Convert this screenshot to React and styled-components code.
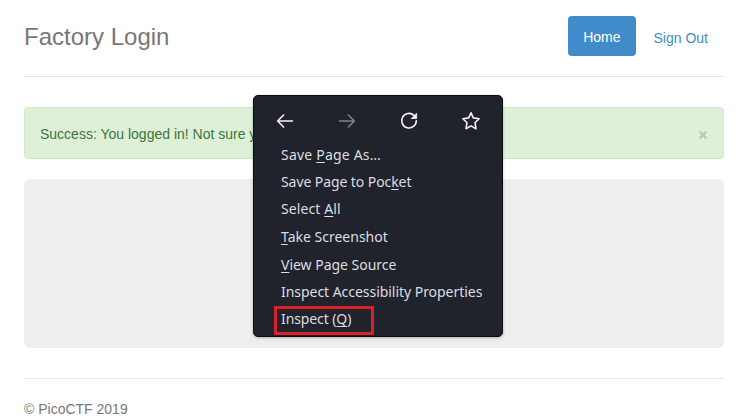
import React from 'react';
import styled, { createGlobalStyle } from 'styled-components';

const GlobalStyle = createGlobalStyle`
  * { box-sizing: border-box; }
  body {
    margin: 0;
    background: #fff;
    overflow: hidden;
    font-family: "Liberation Sans", Arial, sans-serif;
    font-size: 14px;
    line-height: 20px;
    color: #333;
  }
`;

const Page = styled.div`
  position: relative;
  width: 743px;
  height: 419px;
  padding: 0 19px 0 24px;
  overflow: hidden;
`;

const Header = styled.header`
  display: flex;
  justify-content: space-between;
  height: 77px;
  padding-top: 16px;
  border-bottom: 1px solid #e5e5e5;
`;

const Title = styled.h3`
  margin: 0;
  font-size: 24px;
  font-weight: 400;
  line-height: 42px;
  color: #777;
`;

const Nav = styled.nav`
  display: flex;
  gap: 2px;
`;

const NavLink = styled.a`
  height: 40px;
  padding: ${(p) => (p.$active ? '11px 15px 9px' : '12px 16px 8px')};
  border-radius: 4px;
  color: ${(p) => (p.$active ? '#fff' : '#428bca')};
  background: ${(p) => (p.$active ? '#428bca' : 'transparent')};
`;

const Alert = styled.div`
  display: flex;
  justify-content: space-between;
  height: 52px;
  margin-top: 30px;
  padding: 16px 15px 14px;
  border: 1px solid #d0e9c6;
  border-radius: 4px;
  background: #dff0d8;
  color: #3c763d;
  white-space: nowrap;
`;

const Dismiss = styled.svg`
  width: 10px;
  height: 10px;
  margin-top: 6px;
`;

const Jumbotron = styled.main`
  height: 169px;
  margin-top: 20px;
  border-radius: 6px;
  background: #eee;
`;

const Footer = styled.footer`
  margin-top: 30px;
  padding-top: 20px;
  border-top: 1px solid #e5e5e5;
  color: #777;
`;

const Menu = styled.div`
  position: absolute;
  left: 253px;
  top: 95px;
  width: 250px;
  height: 242px;
  border: 1px solid #0a0b0f;
  border-radius: 5px;
  background: #20232c;
  box-shadow: 0 1px 3px rgba(0, 0, 0, 0.25);
  color: #dcdde0;
  font-family: "Noto Sans", sans-serif;
  font-size: 14px;
`;

const Toolbar = styled.div`
  display: flex;
  justify-content: space-between;
  align-items: center;
  height: 45px;
  padding: 4px 21px 0 21px;
`;

const Icon = styled.svg`
  width: 20px;
  height: 20px;
  fill: none;
  stroke: ${(p) => (p.$dim ? '#80828a' : '#f4f4f6')};
  stroke-width: 1.6;
  stroke-linecap: round;
  stroke-linejoin: round;
`;

const Items = styled.div`
  display: grid;
  grid-template-rows: 27px 27px 28px 28px 27px 27px 27px;
  padding: 4px 0 0 27px;
`;

const Item = styled.div`
  display: flex;
  align-items: flex-start;
  white-space: pre;
`;

const Label = styled.span`
  letter-spacing: ${(p) => p.$spacing}px;
`;

const Key = styled.span`
  text-decoration: underline;
  text-decoration-thickness: 1px;
  text-underline-offset: 2px;
  text-decoration-skip-ink: none;
`;

const Highlight = styled.div`
  position: absolute;
  left: 20px;
  top: 210px;
  width: 100px;
  height: 29px;
  border: 3px solid #dc2028;
`;

const items = [
  ['Save ', 'P', 'age As…', 0.2],
  ['Save Page to Poc', 'k', 'et', -0.08],
  ['Select ', 'A', 'll', 0.1],
  ['', 'T', 'ake Screenshot', 0],
  ['', 'V', 'iew Page Source', -0.02],
  ['Inspect Accessibility Properties', '', '', -0.04],
  ['Inspect (', 'Q', ')', -0.1],
];

export default function App() {
  return (
    <>
      <GlobalStyle />
      <Page>
        <Header>
          <Title>Factory Login</Title>
          <Nav>
            <NavLink $active>Home</NavLink>
            <NavLink>Sign Out</NavLink>
          </Nav>
        </Header>
        <Alert>
          <span>Success: You logged in! Not sure y</span>
          <Dismiss viewBox="0 0 10 10" aria-label="Dismiss">
            <path d="M1.6 1.6 8.4 8.4M8.4 1.6 1.6 8.4" stroke="#b8cab2" strokeWidth="2.3" />
          </Dismiss>
        </Alert>
        <Jumbotron />
        <Footer>© PicoCTF 2019</Footer>
        <Menu>
          <Toolbar>
            <Icon viewBox="0 0 20 20"><path d="M17.5 10H2.6M8.6 4 2.6 10l6 6" /></Icon>
            <Icon viewBox="0 0 20 20" $dim><path d="M2.5 10h14.9M11.4 4l6 6-6 6" /></Icon>
            <Icon viewBox="0 0 20 20">
              <path d="M15 4.4A7.3 7.3 0 1 0 17.3 9.7" />
              <path d="M17.6 2.5v5h-5z" fill="#f4f4f6" strokeWidth="0.8" />
            </Icon>
            <Icon viewBox="0 0 20 20">
              <path d="M10 1.8l2.3 5.1 5.8.8-4.1 4 1 6-5-2.8-5 2.8 1-6-4.1-4 5.8-.8z" />
            </Icon>
          </Toolbar>
          <Items>
            {items.map(([before, key, after, spacing]) => (
              <Item key={before + key + after}>
                <Label $spacing={spacing}>{before}<Key>{key}</Key>{after}</Label>
              </Item>
            ))}
          </Items>
          <Highlight />
        </Menu>
      </Page>
    </>
  );
}
